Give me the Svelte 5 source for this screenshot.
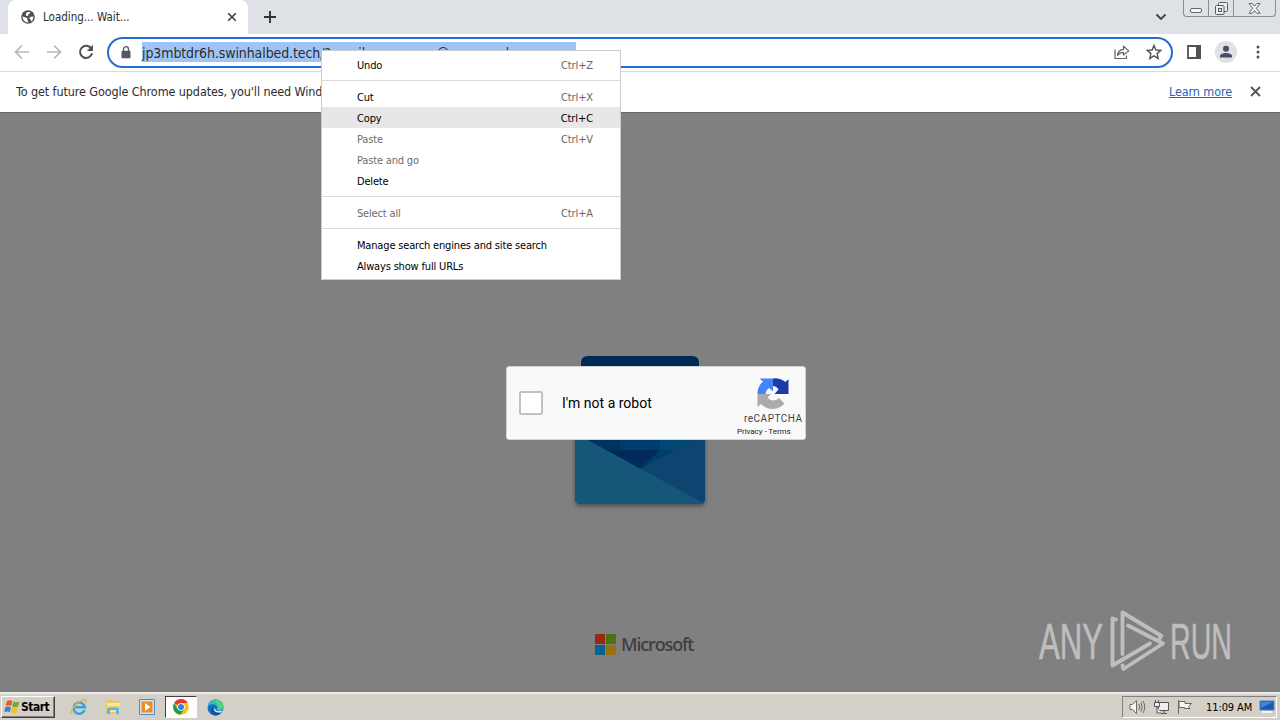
<script>
	const menu = [
		{ label: 'Undo', keys: 'Ctrl+Z' },
		{ sep: true },
		{ label: 'Cut', keys: 'Ctrl+X' },
		{ label: 'Copy', keys: 'Ctrl+C', active: true },
		{ label: 'Paste', keys: 'Ctrl+V', disabled: true },
		{ label: 'Paste and go', disabled: true },
		{ label: 'Delete' },
		{ sep: true },
		{ label: 'Select all', keys: 'Ctrl+A', disabled: true },
		{ sep: true },
		{ label: 'Manage search engines and site search' },
		{ label: 'Always show full URLs' }
	];

	let url = $state('jp3mbtdr6h.swinhalbed.tech/?email=rencusam@owerscorlcom.sa');
	let checked = $state(false);
</script>

<div class="screen">
	<header class="tabstrip">
		<div class="tab">
			<svg class="globe" width="14" height="14" viewBox="0 0 14 14">
				<circle cx="7" cy="7" r="6.8" fill="#4d5156" />
				<path d="M1.6 6.6 4.5 7.6 6.6 8.2 6.2 9.8 7.6 12.4C4 12.8 1.4 10 1.6 6.6ZM6.2 2 9.4 1.9 8.8 3.6 7 4.4 7.4 5.8 5.4 6 4.6 4.2ZM9.4 6.8 12.4 6.4C12.6 8.6 11.6 10.6 10.2 11.6L9.8 9.6 8.2 8.6Z" fill="#fff" />
			</svg>
			<span class="tab-title">Loading... Wait...</span>
			<svg width="10" height="10" viewBox="0 0 10 10"><path d="M1.2 1.2 8.8 8.8M8.8 1.2 1.2 8.8" stroke="#3c4043" stroke-width="1.6" /></svg>
		</div>
		<svg class="plus" width="14" height="14" viewBox="0 0 14 14"><path d="M7 1V13M1 7H13" stroke="#303438" stroke-width="1.9" /></svg>
		<svg class="chevron" width="12" height="8" viewBox="0 0 12 8"><path d="M1.5 1.5 6 6 10.5 1.5" fill="none" stroke="#3c4043" stroke-width="1.8" /></svg>
		<div class="winbuttons">
			<span class="min"><svg width="13" height="6" viewBox="0 0 13 6"><rect x=".5" y=".5" width="11" height="4" rx="1.5" fill="#f4f5f7" stroke="#62666e" /></svg></span>
			<span class="max"><svg width="13" height="13" viewBox="0 0 13 13" fill="#eceef1" stroke="#555b65"><rect x="3.5" y=".5" width="9" height="9" rx="1" /><rect x=".5" y="3.5" width="8.5" height="9" rx="1" /><rect x="3.5" y="6.5" width="3" height="3" /></svg></span>
			<span class="close"><svg width="13" height="11" viewBox="0 0 13 11"><path d="M1 .5H4.2L6.5 3.2 8.8.5H12L8.3 5.3 12 10.3H8.8L6.5 7.5 4.2 10.3H1L4.7 5.3Z" fill="#f4f5f7" stroke="#62666e" /></svg></span>
		</div>
	</header>

	<div class="toolbar">
		<svg width="16" height="16" viewBox="0 0 16 16"><path d="M15 8H2M8 1.5 1.5 8 8 14.5" fill="none" stroke="#b4b6b9" stroke-width="1.7" /></svg>
		<svg width="16" height="16" viewBox="0 0 16 16"><path d="M1 8H14M8 1.5 14.5 8 8 14.5" fill="none" stroke="#b4b6b9" stroke-width="1.7" /></svg>
		<svg class="reload" width="16" height="16" viewBox="0 0 16 16"><path d="M13.2 4.4A6.1 6.1 0 1 0 14.1 9.3" fill="none" stroke="#4f5358" stroke-width="2" /><path d="M15 .8V7H8.8Z" fill="#4f5358" /></svg>
		<div class="omnibox">
			<svg class="lock" width="10" height="13" viewBox="0 0 10 13"><rect x=".5" y="4.8" width="9" height="7.4" rx="1" fill="#55595e" /><path d="M2.5 5V3.2A2.5 2.5 0 0 1 7.5 3.2V5" fill="none" stroke="#55595e" stroke-width="1.3" /></svg>
			<span class="url">{url}</span>
			<svg class="share" width="16" height="15" viewBox="0 0 16 15" fill="none" stroke="#5f6368" stroke-width="1.2"><path d="M1 4.5V13.5H12.5V10.5" /><path d="M3.5 10.5C4 6.5 6.2 4.6 9.5 4.4V1.2L14.8 5.9 9.5 10V7.3C7 7.3 5 8.3 3.5 10.5Z" stroke-linejoin="round" /></svg>
			<svg class="star" width="16" height="16" viewBox="0 0 16 16"><path d="M8 1.4 9.9 6 14.8 6.4 11.1 9.6 12.2 14.4 8 11.8 3.8 14.4 4.9 9.6 1.2 6.4 6.1 6Z" fill="none" stroke="#4f5358" stroke-width="1.4" /></svg>
		</div>
		<svg class="panel" width="14" height="14" viewBox="0 0 14 14"><path d="M1 1H13V13H1Z" fill="none" stroke="#4f5358" stroke-width="1.8" /><path d="M9 0H14V14H9Z" fill="#4f5358" /></svg>
		<div class="avatar">
			<svg width="14" height="14" viewBox="0 0 14 14" fill="#474f67"><circle cx="7" cy="3.8" r="3" /><path d="M1 12.5V11C1 9 4.5 8 7 8S13 9 13 11V12.5Z" /></svg>
		</div>
		<svg class="dots" width="4" height="14" viewBox="0 0 4 14" fill="#4f5358"><circle cx="2" cy="2" r="1.5" /><circle cx="2" cy="7" r="1.5" /><circle cx="2" cy="12" r="1.5" /></svg>
	</div>

	<div class="infobar">
		<span class="notice">To get future Google Chrome updates, you'll need Wind</span>
		<a href="#learn">Learn more</a>
		<svg width="11" height="11" viewBox="0 0 11 11"><path d="M1 1 10 10M10 1 1 10" stroke="#4f5358" stroke-width="1.8" /></svg>
	</div>

	<main>
		<svg class="outlook" width="142" height="160" viewBox="0 0 142 160">
			<defs>
				<clipPath id="envelope"><path d="M6 70H136V143Q136 149 130 149H12Q6 149 6 143Z" /></clipPath>
				<filter id="soft" x="-10%" y="-10%" width="120%" height="125%"><feDropShadow dx="0" dy="2" stdDeviation="2" flood-opacity=".4" /></filter>
			</defs>
			<path d="M12 40V8Q12 1 19 1H123Q130 1 130 8V40Z" fill="#002b59" />
			<g filter="url(#soft)">
				<path d="M6 70H136V143Q136 149 130 149H12Q6 149 6 143Z" fill="#0a4a75" />
				<g clip-path="url(#envelope)">
					<path d="M12 70H51V105H12Z" fill="#00305d" />
					<path d="M51 70H91V95H51Z" fill="#003c6c" />
					<path d="M91 70H136V95H91Z" fill="#054a74" />
					<path d="M38 95H106L71 114Z" fill="#002c58" />
					<path d="M91 95H112L71 114Z" fill="#053c69" />
					<path d="M136 79V149L71 114Z" fill="#08456f" />
					<path d="M6 78 136 149H6Z" fill="#155779" />
				</g>
			</g>
		</svg>

		<div class="captcha">
			<button class="box" aria-label="I'm not a robot" onclick={() => (checked = !checked)}></button>
			<span class="robot">I'm not a robot</span>
			<div class="brand">
				<svg width="32" height="32" viewBox="0 0 64 64">
					<path d="M63 34V4.6L56.4 10.2A32 32 0 0 0 32 3V18A14 14 0 0 1 43 25L35 34Z" fill="#1c3aa9" />
					<path d="M32 3H5L12 9A32 32 0 0 0 1 34H17A15 15 0 0 1 24.3 22L32 29Z" fill="#4285f4" />
					<path d="M1 34V60L8 54A32 32 0 0 0 55 53L44 42A15 15 0 0 1 21 41L28 34Z" fill="#ababab" />
				</svg>
				<span class="name">reCAPTCHA</span>
				<span class="terms">Privacy - Terms</span>
			</div>
		</div>

		<div class="microsoft">
			<svg width="21" height="21" viewBox="0 0 21 21"><path d="M0 0H10V10H0Z" fill="#962a16" /><path d="M11 0H21V10H11Z" fill="#477315" /><path d="M0 11H10V21H0Z" fill="#056590" /><path d="M11 11H21V21H11Z" fill="#9a7109" /></svg>
			<span>Microsoft</span>
		</div>

		<svg class="anyrun" width="210" height="70" viewBox="0 0 210 70">
			<g fill="none" stroke="#bebebe" stroke-width="3.8" stroke-linejoin="round" stroke-linecap="round">
				<path d="M80 13.5 76.5 12.5V59.5L114 37.5" />
				<path d="M86.5 48V6.5L125.5 30 123.5 32.5" />
				<path d="M92 19.5 127 37.5 87.5 63 86.5 59.5" />
			</g>
			<text x="3" y="53" textLength="64" lengthAdjust="spacingAndGlyphs">ANY</text>
			<text x="134" y="53" textLength="62" lengthAdjust="spacingAndGlyphs">RUN</text>
		</svg>
	</main>

	<footer class="taskbar">
		<button class="start">
			<svg width="17" height="16" viewBox="0 0 17 16"><path d="M3 2Q6 .4 8.5 2L7.3 7Q4.5 5.7 1.7 7Z" fill="#e85b25" /><path d="M9.5 2.5Q12 4 15.5 2.4L14 7.5Q11 9 8.2 7.4Z" fill="#6cab36" /><path d="M1.4 8.2Q4.2 7 7 8.3L5.8 13Q3 11.8.2 13Z" fill="#3981c8" /><path d="M8 8.6Q10.8 10 13.8 8.6L12.5 13.6Q9.5 15 6.7 13.4Z" fill="#f4bd25" /></svg>
			Start
		</button>
		<div class="apps">
			<span class="app">
				<svg width="18" height="18" viewBox="0 0 18 18"><path d="M14.6 11.8A5.6 5.6 0 1 1 14.8 9.3H5.4" fill="none" stroke="#35a5de" stroke-width="2.5" /><path d="M2.5 15.8C-1 16 2 9 8 4.8S18 .8 15.3 5.2" fill="none" stroke="#e5b53d" stroke-width="1.4" /></svg>
			</span>
			<span class="app">
				<svg width="18" height="18" viewBox="0 0 18 18"><path d="M2 3 7 1.5 8.5 3H15V15H2Z" fill="#e9c75c" /><path d="M3 5H16V14H3Z" fill="#f8e6a0" /><path d="M1 8H16V11H1Z" fill="#efd26f" /><path d="M3 16V11Q3 9.5 5 9.5H13Q15 9.5 15 11V16H12V12H6V16Z" fill="#62b5df" /></svg>
			</span>
			<span class="app">
				<svg width="16" height="16" viewBox="0 0 16 16"><path d="M.5.5H15.5V15.5H.5Z" fill="#cbe3f5" stroke="#4b91c6" /><path d="M2.5 2.5H13.5V13.5H2.5Z" fill="#f08a20" /><path d="M6 4 11.5 8 6 12Z" fill="#fff" /></svg>
			</span>
			<span class="app current">
				<svg width="16" height="16" viewBox="0 0 16 16"><circle cx="8" cy="8" r="7.8" fill="#fbc116" /><path d="M8 8 1.2 4.1A7.8 7.8 0 0 1 14.8 4.1H8Z" fill="#e33b2e" /><path d="M1.2 4.1A7.8 7.8 0 0 0 7.4 15.8L11.4 9.9 8 8 4.6 9.9Z" fill="#229a4c" /><circle cx="8" cy="8" r="3.8" fill="#fff" /><circle cx="8" cy="8" r="3" fill="#3c7de6" /></svg>
			</span>
			<span class="app">
				<svg width="17" height="17" viewBox="0 0 17 17"><circle cx="8.5" cy="8.5" r="8" fill="#1274c4" /><path d="M.8 7C2 2.5 5 .5 8.7.5C14 .5 17 5 16.5 8.5C16 11.5 12.5 12 10 11L10.5 8.5C10 5 4 4 .8 7Z" fill="#35bdc0" /><path d="M8 1C13 0 17 5 16.3 8.6 15.5 11 12.5 11.8 10.5 11L11 8Z" fill="#52cf89" /><path d="M6 8C5 12 9 15.5 14 13.5C11 18 5 17 4 12.5C3.5 10 4.5 8.5 6 8Z" fill="#124d98" /><path d="M8 9C8 12 11 13.2 15.5 11.5L14.5 13.2C11 14.3 7 13 7 10Z" fill="#e8f2f4" /></svg>
			</span>
		</div>
		<div class="tray">
			<svg width="17" height="16" viewBox="0 0 17 16" fill="none" stroke="#6b6b6b"><path d="M1 5.5H3.5L7.5 1.5V14.5L3.5 10.5H1Z" fill="#f6f6f6" /><path d="M10 5Q11.5 8 10 11M12 3.5Q14.5 8 12 12.5M14 2Q17.5 8 14 14" /></svg>
			<svg width="17" height="16" viewBox="0 0 17 16" fill="#eee" stroke="#555"><path d="M5.5 3.5H15.5V11.5H5.5ZM8 14.5H14M11 12V14" /><path d="M1.5 3.5H6.5V7.5H1.5ZM2.5 1V3M5.5 1V3M4 8V14H8" /></svg>
			<svg width="16" height="16" viewBox="0 0 16 16" fill="#f6f6f6" stroke="#666"><path d="M1.5 1V15M2 2.5H8V4.5H14.5L11.5 7.5 13 9.5H7.5V8.5H2Z" /></svg>
			<time>11:09 AM</time>
			<svg class="monitor" width="16" height="14" viewBox="0 0 16 14"><path d="M1 1H15V10H1Z" fill="#1759b5" stroke="#5380b5" /><path d="M2 2H14L2 8Z" fill="#3b86d8" /><path d="M3 12H13" stroke="#edf4fb" stroke-width="2" /></svg>
		</div>
	</footer>

	<div class="menu" role="menu">
		{#each menu as item}
			{#if item.sep}
				<div class="sep"></div>
			{:else}
				<div class="item" class:active={item.active} class:disabled={item.disabled} role="menuitem" tabindex="-1">
					<span>{item.label}</span>
					{#if item.keys}<span class="keys">{item.keys}</span>{/if}
				</div>
			{/if}
		{/each}
	</div>
</div>

<style>
	:global(body) { overflow: hidden; }
	.screen { position: relative; width: 1280px; height: 720px; display: flex; flex-direction: column; overflow: hidden; font-family: 'DejaVu Sans Condensed', 'DejaVu Sans', sans-serif; font-stretch: condensed; font-size: 11px; color: #2c2c2e; }
	svg { display: block; flex: none; }
	span, a, time { white-space: nowrap; }

	.tabstrip { height: 34px; background: #dee1e6; display: flex; align-items: center; padding-left: 8px; }
	.tab { box-sizing: border-box; width: 240px; height: 34px; background: #fff; border-radius: 8px 8px 0 0; display: flex; align-items: center; padding: 0 11px 0 13px; }
	.tab-title { flex: 1; margin-left: 8px; font-size: 11.5px; }
	.plus { margin-left: 15px; }
	.chevron { margin-left: auto; }
	.winbuttons { align-self: flex-start; box-sizing: border-box; display: flex; width: 93px; height: 17px; margin: 0 4px 0 16px; border: 1px solid #888c93; border-top: 0; border-radius: 0 0 4px 4px; }
	.winbuttons span { box-sizing: border-box; display: flex; justify-content: center; align-items: center; }
	.min { width: 25px; padding-top: 5px; border-right: 1px solid #888c93; }
	.max { width: 25px; border-right: 1px solid #888c93; }
	.close { width: 41px; }

	.toolbar { box-sizing: border-box; height: 38px; background: #fff; border-bottom: 1px solid #dadce0; display: flex; align-items: center; gap: 16px; padding: 0 0 1px 14px; }
	.reload { margin-right: -3px; }
	.omnibox { box-sizing: border-box; width: 1066px; height: 31px; border: 2px solid #246dd3; border-radius: 16px; display: flex; align-items: center; padding: 0 9px 0 12px; }
	.lock { margin-right: 11px; }
	.url { box-sizing: border-box; width: 434px; height: 20px; line-height: 23px; background: #9fc5f6; font-size: 14px; letter-spacing: -0.1px; }
	.share { margin-left: auto; margin-right: 16px; }
	.panel { margin-left: -2px; }
	.avatar { width: 22px; height: 22px; border-radius: 50%; background: #dee1e6; display: flex; align-items: center; justify-content: center; margin-left: -2px; }
	.dots { margin-left: 3px; }

	.infobar { box-sizing: border-box; height: 41px; background: #fff; border-bottom: 1px solid #686868; display: flex; align-items: center; padding: 0 19px 2px 16px; font-size: 12.5px; }
	.notice { width: 305px; overflow: hidden; letter-spacing: -0.1px; }
	a { margin-left: auto; margin-right: 18px; color: #2464b8; letter-spacing: -0.1px; }

	main { position: relative; flex: 1; background: #808080; }
	.outlook { position: absolute; left: 569px; top: 242px; }
	.captcha { box-sizing: border-box; position: absolute; left: 506px; top: 253px; width: 300px; height: 74px; background: #f9f9f9; border: 1px solid #d3d3d3; border-radius: 3px; display: flex; align-items: center; padding-left: 12px; color: #000; font-stretch: normal; }
	.box { box-sizing: border-box; width: 24px; height: 24px; padding: 0; background: #fff; border: 2px solid #c1c1c1; border-radius: 2px; }
	.robot { font-family: Roboto, sans-serif; font-size: 14px; margin-left: 19px; }
	.brand { align-self: stretch; width: 72px; margin-left: auto; display: flex; flex-direction: column; padding-top: 10px; }
	.brand svg { margin-left: 24px; }
	.name { margin: 3px 0 0 11px; font: 10px/13px Roboto, sans-serif; letter-spacing: 0.5px; color: #444; }
	.terms { margin-left: 4px; font: 8px/13px Roboto, sans-serif; letter-spacing: -0.05px; color: #222; }
	.microsoft { position: absolute; left: 595px; top: 521px; display: flex; align-items: center; gap: 5px; color: #404040; font: 600 18px/21px 'Open Sans', sans-serif; font-stretch: normal; letter-spacing: -1.15px; }
	.anyrun { position: absolute; left: 1036px; top: 493px; }
	.anyrun text { font-family: 'Liberation Sans', sans-serif; font-size: 50px; fill: #bebebe; stroke: #bebebe; stroke-width: 0.7px; }

	.taskbar { box-sizing: border-box; height: 28px; background: #d4d0c8; border-top: 2px solid #eeece8; display: flex; align-items: center; padding: 0 3px 0 1px; }
	.start { box-sizing: border-box; width: 54px; height: 22px; display: flex; align-items: center; padding: 0 0 0 2px; background: #d4d0c8; border: 1px solid; border-color: #fff #404040 #404040 #fff; box-shadow: inset -1px -1px #808080; color: #000; font: bold 12px 'DejaVu Sans Condensed', sans-serif; letter-spacing: -0.5px; }
	.apps { display: flex; margin-left: 7px; }
	.app { box-sizing: border-box; width: 34px; height: 22px; display: flex; align-items: center; justify-content: center; }
	.current { width: 32px; margin: 0 1px; background: #fff; border: 1px solid; border-color: #404040 #fff #fff #404040; }
	.tray { box-sizing: border-box; width: 155px; height: 22px; margin-left: auto; display: flex; align-items: center; gap: 7px; padding-left: 6px; border: 1px solid; border-color: #808080 #fff #fff #808080; color: #000; }
	time { margin-left: 6px; letter-spacing: -0.1px; }

	.menu { box-sizing: border-box; position: absolute; left: 321px; top: 50px; width: 300px; height: 230px; padding-top: 3px; background: #fff; border: 1px solid #ccc; color: #000; letter-spacing: -0.17px; }
	.item { box-sizing: border-box; height: 21px; display: flex; align-items: center; justify-content: space-between; padding: 2px 27px 0 35px; }
	.active { background: #e7e7e7; }
	.disabled { color: #6d6d6d; }
	.keys { color: #666; letter-spacing: -0.1px; }
	.active .keys { color: #000; }
	.sep { height: 11px; display: flex; align-items: center; }
	.sep::before { content: ''; flex: 1; height: 1px; background: #d9d9d9; }
</style>
